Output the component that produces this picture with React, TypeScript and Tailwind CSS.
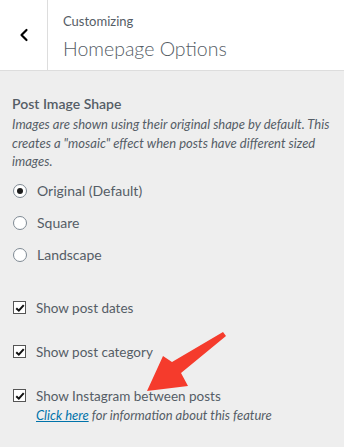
import { ChevronLeft } from "lucide-react";

const font = { fontFamily: '"Lato", "Liberation Sans", sans-serif' };

const Radio = ({ label, checked }: { label: string; checked?: boolean }) => (
  <label className="flex h-8 items-center">
    <span className="ml-[1px] flex h-[14px] w-[14px] items-center justify-center rounded-full border border-[#7e8993] bg-white">
      {checked && <span className="h-[6px] w-[6px] rounded-full bg-[#1e1e1e]" />}
    </span>
    <span className="ml-[10px] text-[14px] text-[#555d66]">{label}</span>
  </label>
);

const Check = ({ label }: { label: string }) => (
  <div className="flex items-center">
    <span className="ml-[1px] flex h-[13px] w-[13px] items-center justify-center border border-[#555] bg-white">
      <svg viewBox="0 0 12 12" className="h-[10px] w-[10px]">
        <path d="M1.5 6.2 L4.6 9.2 L10.5 2.5" fill="none" stroke="#111" strokeWidth="2.4" />
      </svg>
    </span>
    <span className="ml-[10px] text-[13.5px] text-[#555d66]">{label}</span>
  </div>
);

export default function App() {
  return (
    <div className="relative h-[447px] w-[344px] overflow-hidden bg-[#eeeeee]" style={font}>
      <header className="flex h-[71px] border-b border-[#dddddd] bg-white">
        <div className="flex w-[48px] items-center justify-center border-r border-[#dddddd] pb-[1px] text-black">
          <ChevronLeft size={20} strokeWidth={2.6} />
        </div>
        <div className="pl-[15px] pt-[11px] text-[#555d66]">
          <div className="text-[13px] leading-[20px]">Customizing</div>
          <div className="mt-[4px] text-[19.5px] font-light leading-[28px]">Homepage Options</div>
        </div>
      </header>

      <div className="px-3 pt-[22px]">
        <div className="text-[14px] font-semibold leading-[22px] text-[#555d66]">Post Image Shape</div>
        <p className="text-[13px] italic leading-[18.5px] text-[#555d66]">
          Images are shown using their original shape by default. This creates a "mosaic" effect when posts
          have different sized images.
        </p>
        <div className="mt-[4px]">
          <Radio label="Original (Default)" checked />
          <Radio label="Square" />
          <Radio label="Landscape" />
        </div>
        <div className="mt-[27px] flex flex-col gap-[24px]">
          <div className="h-[20px]"><Check label="Show post dates" /></div>
          <div className="h-[20px]"><Check label="Show post category" /></div>
          <div>
            <div className="h-[20px]"><Check label="Show Instagram between posts" /></div>
            <div className="pl-[24px] text-[13px] italic leading-[18px] text-[#555d66]">
              <a className="text-[#0073aa] underline">Click here</a> for information about this feature
            </div>
          </div>
        </div>
      </div>

      <svg className="absolute left-0 top-0" width="344" height="447" viewBox="0 0 344 447">
        <polygon
          points="223,332 226,336 181,373 188,386 147,391 163,356 172,362"
          fill="#f53b2c"
        />
      </svg>
    </div>
  );
}
